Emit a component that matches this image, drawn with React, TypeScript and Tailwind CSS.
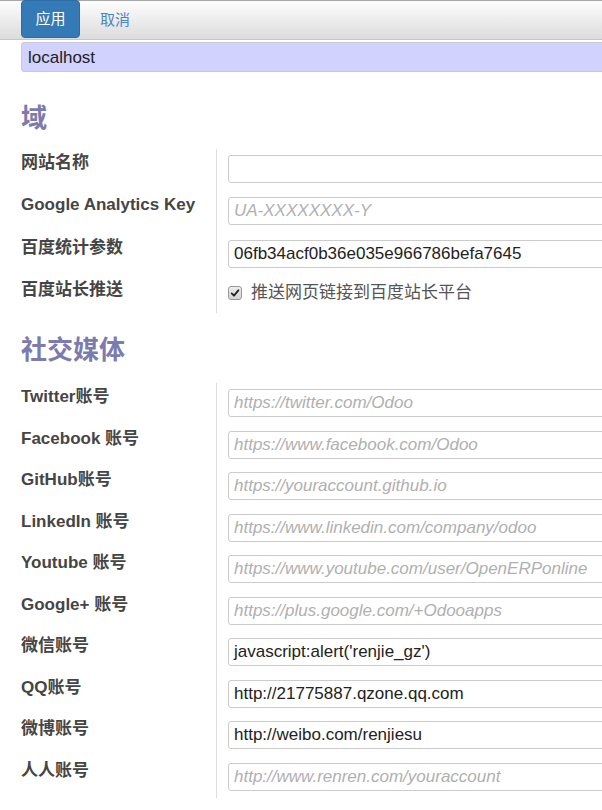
import type { ReactNode } from 'react'

const FONT = "font-['Liberation_Sans','Noto_Sans_CJK_SC',sans-serif]"

interface RowProps {
  label: string
  height: string
  children: ReactNode
}

function Row({ label, height, children }: RowProps) {
  return (
    <div className={`flex ${height}`}>
      <div className="w-[195px] shrink-0 pt-[2px] text-[17px] leading-[24px] font-bold text-[#454545] whitespace-nowrap">
        {label}
      </div>
      <div className="flex-1 border-l border-[#dcdcdc] pl-[11px] pt-[6px]">{children}</div>
    </div>
  )
}

function Field({ value, placeholder }: { value?: string; placeholder?: string }) {
  return (
    <div className="w-[420px] h-[28px] border border-[#cccccc] rounded-[3px] bg-white pl-[5px] flex items-center text-[17px] leading-[20px] whitespace-nowrap">
      {value ? (
        <span className="text-[#222]">{value}</span>
      ) : placeholder ? (
        <span className="text-[#b0b0b0] italic">{placeholder}</span>
      ) : null}
    </div>
  )
}

const social = [
  { label: 'Twitter账号', placeholder: 'https://twitter.com/Odoo' },
  { label: 'Facebook 账号', placeholder: 'https://www.facebook.com/Odoo' },
  { label: 'GitHub账号', placeholder: 'https://youraccount.github.io' },
  { label: 'LinkedIn 账号', placeholder: 'https://www.linkedin.com/company/odoo' },
  { label: 'Youtube 账号', placeholder: 'https://www.youtube.com/user/OpenERPonline' },
  { label: 'Google+ 账号', placeholder: 'https://plus.google.com/+Odooapps' },
  { label: '微信账号', value: "javascript:alert('renjie_gz')" },
  { label: 'QQ账号', value: 'http://21775887.qzone.qq.com' },
  { label: '微博账号', value: 'http://weibo.com/renjiesu' },
  { label: '人人账号', placeholder: 'http://www.renren.com/youraccount' },
]

export default function App() {
  return (
    <div className={`w-[602px] h-[810px] overflow-hidden bg-white ${FONT}`}>
      {/* Top toolbar */}
      <div className="h-[40px] border-t border-b border-t-[#a8a8a8] border-b-[#c6c6c6] bg-gradient-to-b from-[#fdfdfd] to-[#dcdcdc] flex items-start pl-[21px]">
        <button
          type="button"
          className="-mt-px h-[38px] w-[59px] rounded-[4px] bg-[#337ab7] border border-[#2e6da4] text-white text-[15px] leading-[20px]"
        >
          应用
        </button>
        <span className="ml-[20px] mt-[9px] text-[15px] leading-[20px] text-[#4a87c2]">取消</span>
      </div>

      <div className="pl-[21px]">
        <div className="mt-[2px] w-[620px] h-[30px] border border-[#c8c8d8] rounded-[3px] bg-[#d2d2ff] pl-[6px] pt-px flex items-center text-[17px] text-[#222]">
          localhost
        </div>

        <h2 className="mt-[31.5px] text-[26px] leading-[28px] font-bold text-[#7c7bad]">域</h2>

        <div className="mt-[17.5px]">
          <Row label="网站名称" height="h-[42px]">
            <Field />
          </Row>
          <Row label="Google Analytics Key" height="h-[43px]">
            <Field placeholder="UA-XXXXXXXX-Y" />
          </Row>
          <Row label="百度统计参数" height="h-[42px]">
            <Field value="06fb34acf0b36e035e966786befa7645" />
          </Row>
          <Row label="百度站长推送" height="h-[37px]">
            <div className="flex items-center gap-[9px] mt-[1px] text-[17px] leading-[20px] text-[#555]">
              <span className="w-[14px] h-[14px] rounded-[3px] border border-[#999] bg-gradient-to-b from-[#eeeeee] to-[#d4d4d4] flex items-center justify-center">
                <svg viewBox="0 0 12 12" className="w-[10px] h-[10px]">
                  <path d="M2 6.5 L4.8 9.2 L10 2.8" fill="none" stroke="#222" strokeWidth="2.2" strokeLinecap="round" strokeLinejoin="round" />
                </svg>
              </span>
              推送网页链接到百度站长平台
            </div>
          </Row>
        </div>

        <h2 className="mt-[22.5px] text-[26px] leading-[28px] font-bold text-[#7c7bad]">社交媒体</h2>

        <div className="mt-[19.5px]">
          {social.map((s) => (
            <Row key={s.label} label={s.label} height="h-[41.5px]">
              <Field value={s.value} placeholder={s.placeholder} />
            </Row>
          ))}
        </div>
      </div>
    </div>
  )
}
